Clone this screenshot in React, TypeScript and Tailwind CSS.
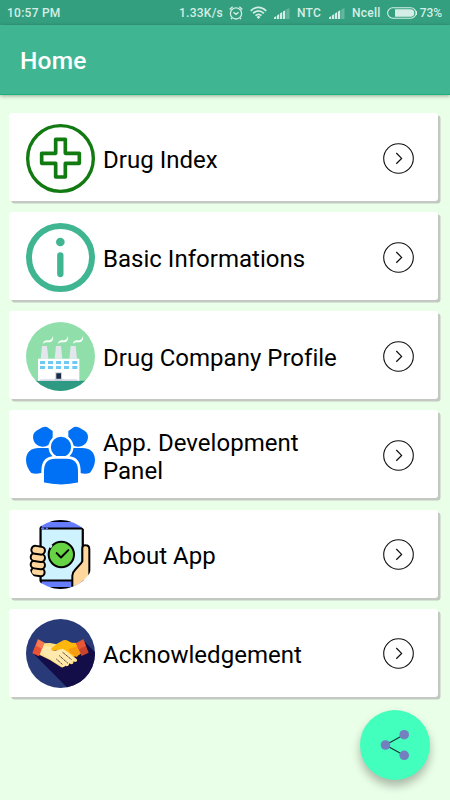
import React from "react";

function CrossIcon() {
  return (
    <svg viewBox="78 60 207 207" className="size-[69px] shrink-0" fill="none" stroke="#117a11">
      <circle cx="181.5" cy="163.5" r="98.5" strokeWidth="10" />
      <path d="M167 106h29v42h42v30h-42v41h-29v-41h-42v-30h42z" strokeWidth="11" strokeLinejoin="round" />
    </svg>
  );
}

function InfoIcon() {
  return (
    <svg viewBox="78 54 207 207" className="size-[69px] shrink-0" fill="none" stroke="#40b592">
      <circle cx="181.5" cy="157.5" r="94.5" strokeWidth="18" />
      <circle cx="181" cy="111" r="13" fill="#40b592" stroke="none" />
      <path d="M181 151v56" strokeWidth="19" strokeLinecap="round" />
    </svg>
  );
}

function FactoryIcon() {
  return (
    <svg viewBox="33 30 207 207" className="size-[69px] shrink-0">
      <defs>
        <clipPath id="factory">
          <circle cx="136.5" cy="133.5" r="103.5" />
        </clipPath>
      </defs>
      <g clipPath="url(#factory)">
        <path fill="#90dfaa" d="M30 27h216v216H30z" />
        <path fill="#2f9a84" d="M30 206h216v40H30z" />
        <g fill="#e3e6ed">
          <path d="M81 102h15l4 38H77zM123 102h15l4 38h-23zM167 102h15l4 38h-23z" />
        </g>
        <path fill="#fff" d="M69 140h124v67H69z" />
        <path fill="#d3d9e3" d="M69 207l9-5h38l8-5v10zM138 207v-10l8 5h38l9 5z" />
        <path fill="#c7cfdb" d="M121 181h20v26h-20z" />
        <path fill="#1d2c44" d="M124 184h14v16h-14z" />
        <g fill="#6dcaf3">
          <path d="M75 147h15v9H75zM99 147h15v9H99zM123 147h15v9h-15zM147 147h15v9h-15zM172 147h15v9h-15zM75 162h15v9H75zM99 162h15v9H99zM123 162h15v9h-15zM147 162h15v9h-15zM172 162h15v9h-15z" />
        </g>
        <g fill="#f7fffa">
          <path d="M84 96c0-9 7-12 15-11 7 1 12-3 15-13 2 12-3 19-14 19-8 0-12 0-16 5z" />
          <path d="M129 96c0-9 7-12 15-11 7 1 12-3 15-13 2 12-3 19-14 19-8 0-12 0-16 5z" />
          <path d="M174 96c0-9 7-12 15-11 7 1 12-3 15-13 2 12-3 19-14 19-8 0-12 0-16 5z" />
        </g>
      </g>
    </svg>
  );
}

function PeopleIcon() {
  return (
    <svg viewBox="33 27 207 207" className="size-[69px] shrink-0" fill="#0070f5">
      <path d="M72 52q12-11 24-7l17 12v24q-10 23-29 23c-17 0-30-13-30-30q0-13 18-22z" />
      <path d="M201 52q-12-11-24-7l-17 12v24q10 23 29 23c17 0 30-13 30-30q0-13-18-22z" />
      <path d="M33 145c0-26 17-37 38-37h42v75H78q-18 5-30-1-14-17-15-37z" />
      <path d="M240 145c0-26-17-37-38-37h-42v75h35q18 5 30-1 14-17 15-37z" />
      <circle cx="138" cy="105" r="34" stroke="#fff" strokeWidth="7" />
      <path d="M83 215v-38c0-29 15-41 38-41h34c23 0 38 12 38 41v38q-55 13-110 0z" stroke="#fff" strokeWidth="8" />
      <path fill="#fff" d="M70 187h13v40H70zM193 187h13v40h-13z" />
    </svg>
  );
}

function PhoneIcon() {
  return (
    <svg viewBox="33 31.5 207 207" className="size-[69px] shrink-0" stroke="#000" strokeLinecap="round" strokeLinejoin="round">
      <defs>
        <clipPath id="phone">
          <circle cx="136.5" cy="135" r="103.5" />
        </clipPath>
      </defs>
      <g clipPath="url(#phone)">
        <path fill="#667dff" strokeWidth="6" d="M77 25h121q5 2 5 9v212H77z" />
        <path fill="none" strokeWidth="7" d="M102 34h68" />
        <path fill="#cef3ff" strokeWidth="6" d="M77 57h126v156H77z" />
        <path stroke="#667dff" strokeWidth="6" d="M81 57h4M95 57h1" />
        <path fill="none" strokeWidth="7" d="M102 236h68" />
        <path fill="#ffd79c" strokeWidth="6" d="M172 246v-47q0-10 9-19l18-20 3-5v-39q1-10 10-9 11 0 11 12v85l-24 42z" />
        <g fill="#ffd79c" strokeWidth="6">
          <rect x="48" y="176" width="41" height="23" rx="11" transform="rotate(8 68 187)" />
          <rect x="47" y="154" width="43" height="24" rx="12" transform="rotate(8 68 166)" />
          <rect x="47" y="132" width="43" height="24" rx="12" transform="rotate(8 68 144)" />
          <rect x="49" y="110" width="41" height="24" rx="12" transform="rotate(8 68 122)" />
        </g>
        <circle cx="139" cy="135" r="38" fill="#65d344" strokeWidth="6" />
        <path stroke="#cef3ff" strokeWidth="7" strokeLinecap="butt" d="M105 114l5-7" />
        <path fill="none" strokeWidth="6" d="M125 131l13 13 22-22" />
      </g>
    </svg>
  );
}

function HandshakeIcon() {
  return (
    <svg viewBox="33 35 207 207" className="size-[69px] shrink-0">
      <defs>
        <clipPath id="hands">
          <circle cx="136.5" cy="138.5" r="103.5" />
        </clipPath>
      </defs>
      <g clipPath="url(#hands)">
        <path fill="#283b78" d="M30 32h214v214H30z" />
        <path fill="#130e48" d="M54 138l104 104h90V142l-42-42-80 50z" />
        <path fill="#ffb70d" d="M108 119l37-20q8-2 15 2l8 5 18 1 14 30-14 10-36 4-26-25-16 3z" />
        <path fill="#f69b12" d="M160 125l32-9 9 21-12 6-3 6-20-12z" />
        <path fill="#ffdf83" d="M82 108l23-1 20 4-15 11q-3 8 8 9l23-6 15 7 28 22q6 7-3 10l-6-2q2 9-7 9l-6-3q1 9-8 9l-5-3q-1 8-10 6l-34-22-35-17z" />
        <path fill="#ffe9ac" d="M84 115l25 4q-3 12 13 12l22-7 39 34q-3 6-12 2 3 8-8 7-1 8-11 7-3 7-10 3l-36-22-31-18z" />
        <path fill="#ffb70d" d="M110 122l37-22 25 7-13 20-17-8-23 11q-14 1-9-8z" />
        <path fill="none" stroke="#2c231c" strokeWidth="3" strokeDasharray="4 2" d="M143 135l28 23M133 145l26 23M124 155l19 17" />
        <path fill="#e95235" d="M68 96l20 10-16 41-20-9z" />
        <path fill="#f77b52" d="M70 96l18 10-7 19-18-10z" />
        <path fill="#ca432d" d="M205 96l16 40-21 10-17-38z" />
        <path fill="#e85734" d="M205 96l8 20-22 10-8-18z" />
      </g>
    </svg>
  );
}

function Arrow() {
  return (
    <svg viewBox="0 0 31 31" className="ml-auto mr-[24px] size-[31px] shrink-0" fill="none" stroke="#111">
      <circle cx="15.5" cy="15.5" r="14.8" strokeWidth="1.1" />
      <path d="M13.3 10l5.3 5.4-5.3 5.4" strokeWidth="1.25" />
    </svg>
  );
}

function Signal() {
  return (
    <svg viewBox="0 0 16 11" className="h-[11px] w-[16px]" fill="#d5eee5">
      <path d="M0 11V9.5L2.2 8v3zM3 11V7.5L5.2 6v5zM6 11V5.5L8.2 4v7zM9 11V3.5L11.2 2.2V11z" />
      <path d="M12.2 11V1.5L15.5 0v11z" opacity=".3" />
    </svg>
  );
}

const items: { label: string; icon: React.ReactNode }[] = [
  { label: "Drug Index", icon: <CrossIcon /> },
  { label: "Basic Informations", icon: <InfoIcon /> },
  { label: "Drug Company Profile", icon: <FactoryIcon /> },
  { label: "App. Development Panel", icon: <PeopleIcon /> },
  { label: "About App", icon: <PhoneIcon /> },
  { label: "Acknowledgement", icon: <HandshakeIcon /> },
];

export default function App() {
  return (
    <div className="relative flex h-[800px] w-[450px] flex-col overflow-hidden bg-[#eaffe7] font-['Roboto',sans-serif]">
      <div className="flex h-[25px] shrink-0 items-center bg-[#339f7f] pl-[7px] pr-[8px] text-[12px] font-medium tracking-[0.25px] text-[#d5eee5]">
        <span className="w-[172px]">10:57 PM</span>
        <span className="w-[50px] whitespace-nowrap">1.33K/s</span>
        <svg viewBox="0 0 14 14" className="h-[14px] w-[14px]" fill="none" stroke="#d5eee5" strokeWidth="1.3">
          <circle cx="7" cy="7.4" r="5.6" />
          <path d="M.6 3.4L3.6.7M13.4 3.4L10.4.7M4.5 6.2L7 8.3l2.5-2.1M3 11.8L2 13.2M11 11.8l1 1.4" />
        </svg>
        <svg viewBox="0 0 17 13" className="ml-[7px] h-[13px] w-[17px]" fill="none" stroke="#d5eee5" strokeWidth="1.7">
          <path d="M.7 4.8q7.8-7 15.6 0M3.1 7.3q5.4-4.8 10.8 0M5.5 9.7q3-2.6 6 0" />
          <path d="M8.5 9.7l2 1.2-2 2-2-2z" fill="#d5eee5" stroke="none" />
        </svg>
        <span className="ml-[7px] mt-[2px]"><Signal /></span>
        <span className="ml-[7px] w-[32px]">NTC</span>
        <span className="mt-[2px]"><Signal /></span>
        <span className="ml-[7px] w-[35px] whitespace-nowrap">Ncell</span>
        <svg viewBox="0 0 30 12" className="h-[12px] w-[30px] shrink-0">
          <rect x=".6" y=".8" width="28.4" height="10.4" rx="5.2" fill="none" stroke="#d5eee5" strokeWidth="1.1" />
          <path d="M8 2.2h15.5a3.8 3.8 0 010 7.6H8z" fill="#d5eee5" />
          <path d="M29.5 4v4" stroke="#d5eee5" />
        </svg>
        <span className="ml-auto whitespace-nowrap tracking-[-0.1px]">73%</span>
      </div>
      <header className="flex h-[70px] shrink-0 items-center border-b border-[#16b17e] bg-[#40b592] pl-[20px] pt-[4px] text-[24.5px] font-medium tracking-[0.2px] text-white shadow-[0_1px_4px_rgba(0,0,0,0.35)]">
        <h1>Home</h1>
      </header>
      <main className="flex flex-col gap-[11.15px] pl-[9px] pr-[12px] pt-[18px]">
        {items.map((item) => (
          <button
            key={item.label}
            className="flex h-[88px] w-full items-center rounded-[3px] bg-white pl-[17px] pt-[2.5px] text-left shadow-[2.5px_2.5px_0_#c3c8c2]"
          >
            {item.icon}
            <span className="ml-[8px] w-[244px] shrink-0 pt-[2.7px] text-[24px] leading-[28px] tracking-[0.02px] text-black">{item.label}</span>
            <span className="ml-[36px] shrink-0"><Arrow /></span>
          </button>
        ))}
      </main>
      <button className="absolute left-[360px] top-[710px] flex size-[70px] items-center justify-center rounded-full bg-[#42ffbd] shadow-[0_6px_10px_rgba(0,0,0,0.28)]" aria-label="Share">
        <svg viewBox="0 0 70 70" className="size-[70px]">
          <path d="M44 24.7L25.5 35 44 45.3" fill="none" stroke="#173a36" strokeWidth="1.2" />
          <g fill="#747fc0">
            <circle cx="25.5" cy="35" r="4.8" />
            <circle cx="44.2" cy="24.7" r="4.8" />
            <circle cx="44.2" cy="45.3" r="4.8" />
          </g>
        </svg>
      </button>
    </div>
  );
}
